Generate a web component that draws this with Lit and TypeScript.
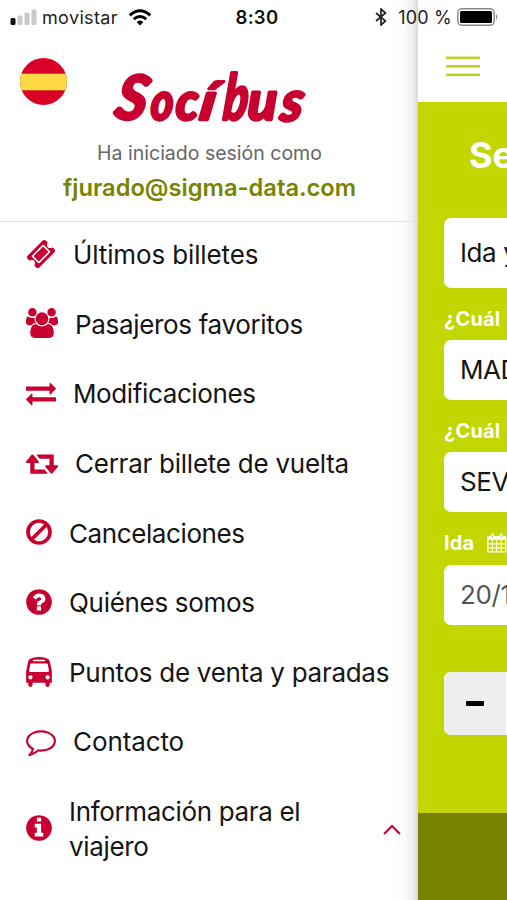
import { LitElement, html, css, svg } from "lit";
import { customElement, property } from "lit/decorators.js";
import { styleMap } from "lit/directives/style-map.js";

interface Glyph {
  view: string;
  width: number;
  body: unknown;
}

const glyphs: Record<string, Glyph> = {
  ticket: {
    view: "0 0 1792 1792",
    width: 30,
    body: svg`<path d="M1024 452l316 316-572 572-316-316zm-211 979l618-618q19-19 19-45t-19-45l-362-362q-18-18-45-18t-45 18l-618 618q-19 19-19 45t19 45l362 362q18 18 45 18t45-18zm889-637l-907 908q-37 37-90.500 37t-90.500-37l-126-126q56-56 56-136t-56-136-136-56-136 56l-125-126q-37-37-37-90.500t37-90.500l907-906q37-37 90.500-37t90.500 37l125 125q-56 56-56 136t56 136 136 56 136-56l126 125q37 37 37 90.500t-37 90.500z"/>`,
  },
  users: {
    view: "64 0 1920 1792",
    width: 32,
    body: svg`<path d="M657 896q-162 5-265 128h-134q-82 0-138-40.500t-56-118.500q0-353 124-353 6 0 43.500 21t97.500 42.500 119 21.500q67 0 133-23-5 37-5 66 0 139 81 256zm1071 637q0 120-73 189.500t-194 69.500h-874q-121 0-194-69.500t-73-189.500q0-53 3.500-103.500t14-109 26.500-108.500 43-97.500 62-81 85.500-53.500 111.500-20q10 0 43 21.500t73 48 107 48 135 21.500 135-21.500 107-48 73-48 43-21.500q61 0 111.500 20t85.500 53.500 62 81 43 97.500 26.500 108.500 14 109 3.500 103.500zm-1024-1277q0 106-75 181t-181 75-181-75-75-181 75-181 181-75 181 75 75 181zm704 384q0 159-112.500 271.500t-271.500 112.500-271.500-112.500-112.500-271.500 112.500-271.500 271.500-112.500 271.500 112.500 112.500 271.500zm576 225q0 78-56 118.500t-138 40.500h-134q-103-123-265-128 81-117 81-256 0-29-5-66 66 23 133 23 59 0 119-21.500t97.500-42.500 43.500-21q124 0 124 353zm-128-609q0 106-75 181t-181 75-181-75-75-181 75-181 181-75 181 75 75 181z"/>`,
  },
  exchange: {
    view: "0 0 1792 1792",
    width: 30,
    body: svg`<path d="M1792 1184v192q0 13-9.500 22.500t-22.500 9.500h-1376v192q0 13-9.500 22.500t-22.500 9.500q-12 0-24-10l-319-320q-9-9-9-22 0-14 9-23l320-320q9-9 23-9 13 0 22.500 9.500t9.500 22.500v192h1376q13 0 22.500 9.500t9.500 22.500zm0-544q0 14-9 23l-320 320q-9 9-23 9-13 0-22.500-9.500t-9.500-22.500v-192h-1376q-13 0-22.500-9.500t-9.500-22.500v-192q0-13 9.500-22.500t22.500-9.500h1376v-192q0-14 9-23t23-9q12 0 24 10l319 319q9 9 9 23z"/>`,
  },
  retweet: {
    view: "0 0 1920 1792",
    width: 32,
    body: svg`<path d="M1280 1504q0 13-9.500 22.500t-22.500 9.500h-960q-8 0-13.500-2t-9-7-5.500-8-3-11.500-1-11.500v-600h-192q-26 0-45-19t-19-45q0-24 15-41l320-384q19-22 49-22t49 22l320 384q15 17 15 41 0 26-19 45t-45 19h-192v384h576q16 0 25 11l160 192q7 10 7 21zm640-416q0 24-15 41l-320 384q-20 23-49 23t-49-23l-320-384q-15-17-15-41 0-26 19-45t45-19h192v-384h-576q-16 0-25-12l-160-192q-7-9-7-20 0-13 9.500-22.500t22.500-9.500h960q8 0 13.500 2t9 7 5.500 8 3 11.500 1 11.500v600h192q26 0 45 19t19 45z"/>`,
  },
  ban: {
    view: "128 0 1536 1792",
    width: 26,
    body: svg`<g fill="none" stroke="currentColor" stroke-width="222"><circle cx="896" cy="896" r="657"/><path d="M431 1361L1361 431"/></g>`,
  },
  question: {
    view: "128 0 1536 1792",
    width: 26,
    body: svg`<path fill-rule="evenodd" d="M1024 1376v-192q0-14-9-23t-23-9h-192q-14 0-23 9t-9 23v192q0 14 9 23t23 9h192q14 0 23-9t9-23zm256-672q0-88-55.500-163t-138.500-116-170-41q-243 0-371 213-15 24 8 42l132 100q7 6 19 6 16 0 25-12 53-68 86-92 34-24 86-24 48 0 85.500 26t37.500 59q0 38-20 61t-68 45q-63 28-115.500 86.500t-52.500 125.500v36q0 14 9 23t23 9h192q14 0 23-9t9-23q0-19 21.500-49.500t54.500-49.500q32-18 49-28.500t46-35 44.500-48 28-60.500 12.500-81zm384 192q0 209-103 385.500t-279.500 279.500-385.500 103-385.500-103-279.500-279.500-103-385.500 103-385.500 279.500-279.500 385.500-103 385.500 103 279.500 279.500 103 385.500z"/>`,
  },
  bus: {
    view: "128 0 1536 1792",
    width: 26,
    body: svg`<path fill-rule="evenodd" d="M512 1216q0-53-37.500-90.500t-90.500-37.500-90.500 37.500-37.500 90.500 37.500 90.500 90.500 37.500 90.500-37.500 37.500-90.500zm1024 0q0-53-37.500-90.500t-90.500-37.500-90.500 37.500-37.500 90.500 37.500 90.500 90.500 37.500 90.500-37.500 37.500-90.500zm-46-396l-72-384q-5-23-22.500-37.500t-40.500-14.500h-918q-23 0-40.500 14.500t-22.500 37.500l-72 384q-5 30 14 53t49 23h1062q30 0 49-23t14-53zm-226-612q0-20-14-34t-34-14h-640q-20 0-34 14t-14 34 14 34 34 14h640q20 0 34-14t14-34zm400 725v603h-128v128q0 53-37.500 90.500t-90.500 37.500-90.500-37.500-37.500-90.500v-128h-768v128q0 53-37.500 90.500t-90.500 37.500-90.500-37.500-37.500-90.500v-128h-128v-603q0-112 25-223l103-454q9-78 97.500-137t230-89 312.500-30 312.500 30 230 89 97.500 137l105 454q23 102 23 223z"/>`,
  },
  comment: {
    view: "0 0 1792 1792",
    width: 30,
    body: svg`<path d="M896 384q-204 0-381.500 69.500t-282 187.500-104.500 255q0 112 71.500 213.500t201.500 175.500l87 50-27 96q-24 91-70 172 152-63 275-171l43-38 57 6q69 8 130 8 204 0 381.500-69.500t282-187.500 104.500-255-104.500-255-282-187.500-381.500-69.500zm896 512q0 174-120 321.500t-326 233-450 85.500q-70 0-145-8-198 175-460 242-49 14-114 22h-5q-15 0-27-10.500t-16-27.500v-1q-3-4-.5-12t2-10 4.500-9.500l6-9 7-8.500 8-9q7-8 31-34.500t34.500-38 31-39.500 32.500-51 27-59 26-76q-157-89-247.500-220t-90.500-281q0-174 120-321.500t326-233 450-85.500 450 85.500 326 233 120 321.500z"/>`,
  },
  info: {
    view: "128 0 1536 1792",
    width: 26,
    body: svg`<path fill-rule="evenodd" d="M1152 1376v-160q0-14-9-23t-23-9h-96v-512q0-14-9-23t-23-9h-320q-14 0-23 9t-9 23v160q0 14 9 23t23 9h96v320h-96q-14 0-23 9t-9 23v160q0 14 9 23t23 9h448q14 0 23-9t9-23zm-128-896v-160q0-14-9-23t-23-9h-192q-14 0-23 9t-9 23v160q0 14 9 23t23 9h192q14 0 23-9t9-23zm640 416q0 209-103 385.500t-279.500 279.500-385.500 103-385.500-103-279.500-279.500-103-385.500 103-385.500 279.500-279.500 385.500-103 385.500 103 279.500 279.500 103 385.500z"/>`,
  },
};

@customElement("menu-row")
class MenuRow extends LitElement {
  @property() icon = "ticket";
  @property() label = "";
  @property({ type: Number }) tracking = 0;
  @property({ type: Boolean }) expandable = false;

  static styles = css`
    :host { display: flex; align-items: center; color: #c8002f; }
    .icon { flex: none; height: 30px; margin-bottom: 1.500px; fill: currentColor; overflow: visible; }
    .label { margin-left: 17px; color: #151515; font-size: 26px; line-height: 35px; white-space: pre-line; }
    .chevron { margin-left: auto; width: 18px; height: 12px; margin-right: 17px; fill: none; stroke: currentColor; stroke-width: 2; }
  `;

  render() {
    const g = glyphs[this.icon];
    return html`
      <svg class="icon" viewBox=${g.view} width=${g.width} height="30">${g.body}</svg>
      <span class="label" style=${styleMap({ letterSpacing: `${this.tracking}px` })}>${this.label}</span>
      ${this.expandable
        ? html`<svg class="chevron" viewBox="0 0 18 12"><path d="M1 11L9 3L17 11" /></svg>`
        : null}
    `;
  }
}

@customElement("app-root")
class AppRoot extends LitElement {
  static styles = css`
    :host { display: flex; position: relative; width: 507px; height: 900px; overflow: hidden; background: #fff; font-family: Inter, "Liberation Sans", sans-serif; }
    .status { position: absolute; inset: 0 0 auto 0; height: 34px; display: grid; grid-template-columns: 1fr auto 1fr; align-items: center; padding: 0 8px 0 10px; box-sizing: border-box; font-size: 18px; color: #222; z-index: 2; }
    .side { display: flex; align-items: center; }
    .end { justify-content: flex-end; }
    .carrier { margin: 0 10px 0 5px; letter-spacing: 0.350px; }
    .clock { font-weight: 600; color: #111; font-size: 18.500px; letter-spacing: 0.300px; padding-left: 5px; }
    .pct { margin: 0 5px 0 11px; letter-spacing: 0.200px; }
    .drawer { flex: none; width: 418px; background: linear-gradient(to right, #fff 395px, #fafafa 405px, #efefef 412px, #d8d8d8 418px); display: flex; flex-direction: column; }
    .head { height: 222px; box-sizing: border-box; padding-top: 58px; border-bottom: 1px solid #e2e2e2; display: grid; grid-template-columns: 47px 1fr; grid-template-rows: 82px 27px auto; padding-left: 20px; flex: none; }
    .flag { width: 47px; height: 47px; }
    .logo { width: 200px; height: 82px; margin-left: 44px; fill: #c8002f; stroke: #c8002f; overflow: visible; }
    .session { grid-column: 1 / 3; justify-self: center; margin-right: 19px; font-size: 19.500px; line-height: 26px; color: #666; }
    .mail { grid-column: 1 / 3; justify-self: center; margin-right: 19px; font-size: 23.700px; line-height: 41px; font-weight: 600; color: #788300; }
    .list { padding: 15px 0 0 26px; display: flex; flex-direction: column; gap: 34.640px; }
    .page { flex: none; width: 89px; overflow: hidden; background: #c3d600; display: flex; flex-direction: column; }
    .bar { height: 102px; background: #fff; flex: none; padding: 56px 0 0 28px; box-sizing: border-box; }
    .burger { display: block; width: 34px; height: 22px; fill: #bfd12a; }
    .form { flex: 1; padding-left: 26px; color: #fff; white-space: nowrap; }
    .title { font-size: 36px; font-weight: 700; line-height: 44px; padding: 31px 0 0 25px; height: 85px; }
    .box { height: 60px; width: 140px; background: #fff; border-radius: 7px; color: #151515; font-size: 26px; line-height: 60px; padding-left: 16px; letter-spacing: -0.400px; }
    .tall { height: 70px; line-height: 70px; }
    .muted { color: #555; }
    .caption { height: 52.200px; padding-top: 10px; box-sizing: border-box; font-size: 20px; letter-spacing: 0.200px; font-weight: 700; display: flex; align-items: center; gap: 13px; }
    .stepper { margin-top: 47.200px; display: flex; width: 160px; height: 63px; border-radius: 7px; overflow: hidden; background: #fff; }
    .minus { width: 62px; background: #eee; display: grid; place-items: center; }
    .dash { width: 18px; height: 5px; border-radius: 1px; background: #000; }
    .foot { height: 87px; background: #788200; flex: none; }
  `;

  private rows: [string, string, number][] = [
    ["ticket", "Últimos billetes", -0.13],
    ["users", "Pasajeros favoritos", -0.33],
    ["exchange", "Modificaciones", -0.38],
    ["retweet", "Cerrar billete de vuelta", -0.25],
    ["ban", "Cancelaciones", -0.4],
    ["question", "Quiénes somos", -0.3],
    ["bus", "Puntos de venta y paradas", -0.28],
    ["comment", "Contacto", -0.1],
    ["info", "Información para el\nviajero", -0.34],
  ];

  render() {
    return html`
      <div class="status">
        <div class="side">
          <svg width="27" height="17" viewBox="0 0 27 17">
            <rect x="0.500" y="9" width="5" height="7" rx="1.500" fill="#111" />
            <g fill="#c9c9c9"><rect x="7.500" y="6.500" width="5" height="9.500" rx="1.500" /><rect x="14.500" y="3.500" width="5" height="12.500" rx="1.500" /><rect x="21.500" y="0.500" width="5" height="15.500" rx="1.500" /></g>
          </svg>
          <span class="carrier">movistar</span>
          <svg width="24" height="17" viewBox="0 0 24 17" fill="none" stroke="#000" stroke-width="3">
            <path d="M1.800 6.300Q12-2.800 22.200 6.300" /><path d="M5.800 10.200Q12 4.800 18.200 10.200" />
            <path d="M8.600 13Q12 10 15.400 13L12 16.500z" fill="#000" stroke="none" />
          </svg>
        </div>
        <span class="clock">8:30</span>
        <div class="side end">
          <svg width="12" height="18" viewBox="0 0 12 18" fill="none" stroke="#222" stroke-width="1.700"><path d="M1 5L10.500 13L6 17V1L10.500 5L1 13" /></svg>
          <span class="pct">100 %</span>
          <svg width="42" height="18" viewBox="0 0 42 18">
            <rect x="0.800" y="0.800" width="36.400" height="16.400" rx="4" fill="#fff" stroke="#888" stroke-width="1.400" />
            <rect x="3" y="3" width="32" height="12" rx="1.500" fill="#000" /><path d="M39 6Q41.500 9 39 12z" fill="#888" />
          </svg>
        </div>
      </div>
      <aside class="drawer">
        <header class="head">
          <svg class="flag" viewBox="0 0 48 48">
            <defs><clipPath id="round"><circle cx="24" cy="24" r="24" /></clipPath></defs>
            <g clip-path="url(#round)"><rect width="48" height="48" fill="#d80027" /><rect y="16" width="48" height="17" fill="#ffda44" /></g>
          </svg>
          <svg class="logo" viewBox="0 0 200 82" font-family="Lato" font-weight="900" font-style="italic" stroke-width="2.500" stroke-linejoin="bevel">
            <text transform="translate(2 60) rotate(6) skewX(-5) scale(0.950 1)" font-size="63">S</text>
            <text transform="translate(39 62) skewX(-3) scale(0.820 1)" font-size="53">o</text>
            <text transform="translate(64 62) skewX(-3) scale(0.950 1)" font-size="53">c</text>
            <text transform="translate(87 62) skewX(-9) scale(1.150 1)" font-size="53">í</text>
            <text transform="translate(111 62) skewX(-5) scale(0.720 1)" font-size="64">b</text>
            <text transform="translate(136 62) skewX(-3) scale(0.980 1)" font-size="55">u</text>
            <text transform="translate(168 63) skewX(-8) scale(0.960 1)" font-size="57">s</text>
          </svg>
          <span class="session">Ha iniciado sesión como</span>
          <span class="mail">fjurado@sigma-data.com</span>
        </header>
        <nav class="list">
          ${this.rows.map(([icon, label, tracking]) => html`<menu-row icon=${icon} .label=${label} .tracking=${tracking} ?expandable=${icon === "info"}></menu-row>`)}
        </nav>
      </aside>
      <main class="page">
        <div class="bar">
          <svg class="burger" viewBox="0 0 34 22"><rect y="0.500" width="34" height="2.600" /><rect y="9" width="34" height="2.600" /><rect y="17.500" width="34" height="2.600" /></svg>
        </div>
        <div class="form">
          <div class="title">Se</div>
          <div class="box tall">Ida y</div>
          <div class="caption">¿Cuál</div>
          <div class="box">MAD</div>
          <div class="caption">¿Cuál</div>
          <div class="box">SEV</div>
          <div class="caption">Ida
            <svg width="22" height="22" viewBox="0 0 22 22" fill="none" stroke="#fff"><rect x="1" y="4" width="20" height="17" rx="1" stroke-width="1.500" /><path d="M1 5.500H21" stroke-width="4" /><path d="M6 7V21M11 7V21M16 7V21M1 12H21M1 16.500H21" stroke-width="1.200" /><path d="M6 1.800V6M16 1.800V6" stroke-width="3.500" stroke-linecap="round" /><path d="M6 1.500V5.500M16 1.500V5.500" stroke="#c3d600" stroke-width="1" /></svg>
          </div>
          <div class="box muted">20/1</div>
          <div class="stepper"><div class="minus"><div class="dash"></div></div></div>
        </div>
        <div class="foot"></div>
      </main>
    `;
  }
}
